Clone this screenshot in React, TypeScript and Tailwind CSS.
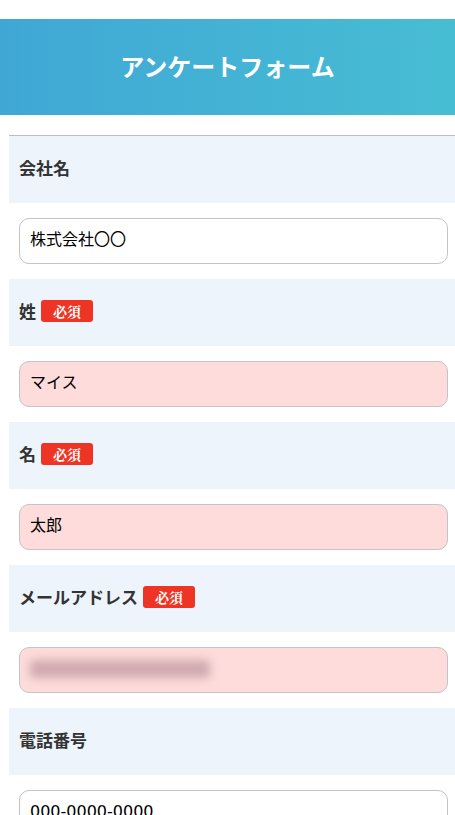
import React from "react";

const font = { fontFamily: '"Noto Sans CJK JP", "Noto Sans", sans-serif' };

function Badge() {
  return (
    <span
      className="ml-[5px] inline-flex h-[22px] w-[52px] items-center justify-center rounded-[3px] bg-[#ee3424] text-[14px] font-bold leading-none text-white"
      style={{ fontFamily: '"Noto Serif CJK JP", "Noto Sans CJK JP", serif' }}
    >
      必須
    </span>
  );
}

function Field({
  label,
  required,
  value,
  pink,
  blur,
}: {
  label: string;
  required?: boolean;
  value: string;
  pink?: boolean;
  blur?: boolean;
}) {
  return (
    <div>
      <div className="flex h-[67px] items-center bg-[#edf4fb] pb-[3px] pl-[10px] text-[17px] font-bold text-[#333333]">
        <span>{label}</span>
        {required && <Badge />}
      </div>
      <div className="py-[15px] pl-[10px] pr-[7px]">
        <div
          className={`flex h-[46px] items-center rounded-[10px] border border-[#c4c4c4] px-[10px] pb-[2px] text-[16px] text-black ${
            pink ? "bg-[#fedcdc]" : "bg-white"
          }`}
          style={{ fontFamily: '"DejaVu Sans", "Noto Sans CJK JP", sans-serif' }}
        >
          {blur ? (
            <span className="h-[18px] w-[180px] rounded-[4px] bg-[#cfa9ae] blur-[5px]" />
          ) : (
            <span>{value}</span>
          )}
        </div>
      </div>
    </div>
  );
}

export default function App() {
  return (
    <div className="min-h-[815px] w-[455px] overflow-hidden bg-white pt-[19px]" style={font}>
      <div className="flex h-[96px] items-center justify-center bg-gradient-to-r from-[#40a7d5] to-[#47bdd3] pb-[2px]">
        <h1 className="text-[24px] font-bold text-white">アンケートフォーム</h1>
      </div>
      <div className="ml-[9px] mt-[20px] border-t border-[#bdbdbd]">
        <Field label="会社名" value="株式会社〇〇" />
        <Field label="姓" required value="マイス" pink />
        <Field label="名" required value="太郎" pink />
        <Field label="メールアドレス" required value="" pink blur />
        <Field label="電話番号" value="000-0000-0000" />
      </div>
    </div>
  );
}
